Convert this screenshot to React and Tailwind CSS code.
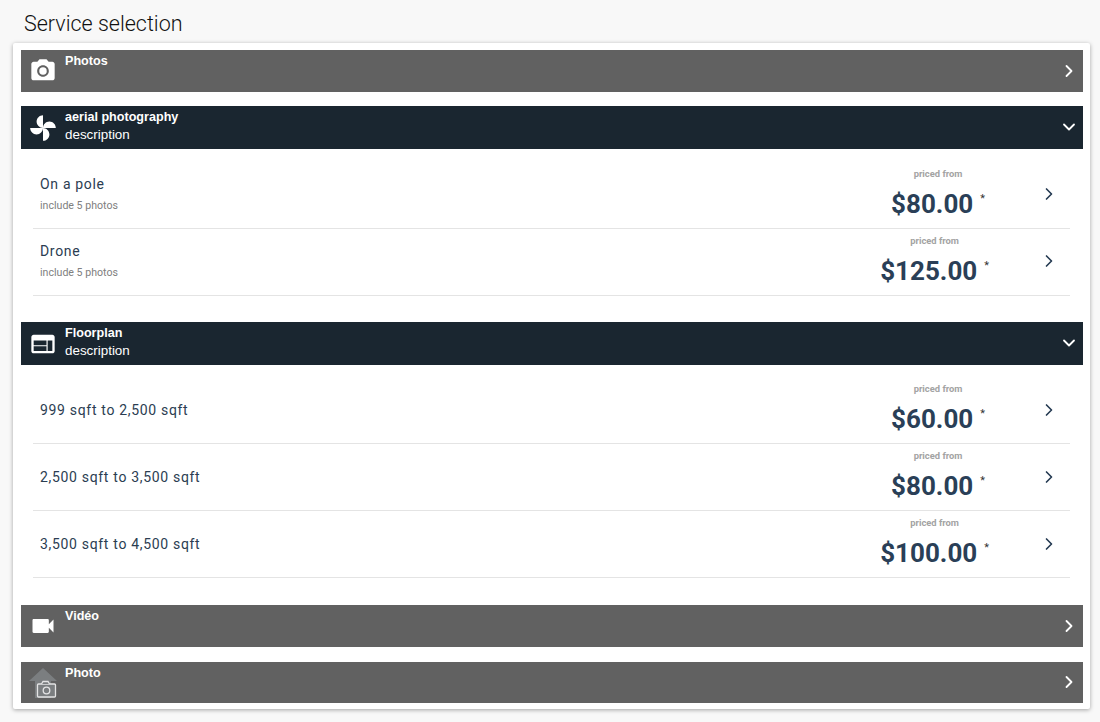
import React from "react";
import { ChevronRight, ChevronDown } from "lucide-react";

const CameraIcon = () => (
  <svg viewBox="0 0 24 24" className="w-[28px] h-[28px] fill-white">
    <circle cx="12" cy="12" r="3.2" />
    <path d="M9 2L7.17 4H4c-1.1 0-2 .9-2 2v12c0 1.1.9 2 2 2h16c1.1 0 2-.9 2-2V6c0-1.1-.9-2-2-2h-3.17L15 2H9zm3 15c-2.76 0-5-2.24-5-5s2.24-5 5-5 5 2.24 5 5-2.24 5-5 5z" />
  </svg>
);

const ToysIcon = () => (
  <svg viewBox="0 0 24 24" className="w-[28px] h-[28px] fill-white">
    <path d="M12 12c0-3 2.5-5.5 5.5-5.5S23 9 23 12H12zm0 0c0 3-2.5 5.5-5.5 5.5S1 15 1 12h11zm0 0c-3 0-5.5-2.5-5.5-5.5S9 1 12 1v11zm0 0c3 0 5.5 2.5 5.5 5.5S15 23 12 23V12z" />
  </svg>
);

const WebIcon = () => (
  <svg viewBox="0 0 24 24" className="w-[28px] h-[28px] fill-white">
    <path d="M20 4H4c-1.1 0-1.99.9-1.99 2L2 18c0 1.1.9 2 2 2h16c1.1 0 2-.9 2-2V6c0-1.1-.9-2-2-2zm-5 14H4v-4h11v4zm0-5H4V9h11v4zm5 5h-4V9h4v9z" />
  </svg>
);

const VideoIcon = () => (
  <svg viewBox="0 0 24 24" className="w-[28px] h-[28px] fill-white">
    <path d="M17 10.5V7c0-.55-.45-1-1-1H4c-.55 0-1 .45-1 1v10c0 .55.45 1 1 1h12c.55 0 1-.45 1-1v-3.5l4 4v-11l-4 4z" />
  </svg>
);

const UploadPhotoIcon = () => (
  <svg viewBox="0 0 30 32" className="w-[30px] h-[32px]">
    <path d="M1 14L15 1l14 13h-6v17H7V14z" fill="#7b7e80" />
    <rect x="9.5" y="17" width="18" height="13" rx="1" fill="#7b7e80" stroke="#e4e4e4" strokeWidth="1.3" />
    <path d="M13.5 17l1.5-2.5h5l1.5 2.5" fill="#7b7e80" stroke="#e4e4e4" strokeWidth="1.3" />
    <circle cx="18.5" cy="23.5" r="3.3" fill="none" stroke="#e4e4e4" strokeWidth="1.3" />
  </svg>
);

const SectionHeader = ({ icon, title, description, open, height = "h-[42px]" }) => (
  <div
    className={`flex items-start text-white font-['Liberation_Sans',sans-serif] ${
      open ? "bg-[#1a2630] h-[43px]" : `bg-[#616161] ${height}`
    }`}
  >
    <div className="w-[44px] h-full flex items-center justify-center shrink-0">{icon}</div>
    <div className="flex-1 pt-[3px]">
      <div className="text-[12.6px] leading-[17px] font-bold">{title}</div>
      {description && <div className="text-[13.4px] leading-[18px]">description</div>}
    </div>
    <div className="w-[28px] h-full pb-[1px] flex items-center justify-center shrink-0">
      {open ? <ChevronDown size={20} strokeWidth={2.2} /> : <ChevronRight size={20} strokeWidth={2.2} />}
    </div>
  </div>
);

const ServiceRow = ({ name, sub, price, offset }) => (
  <div className="h-[67px] flex border-b border-[#e4e4e4] font-['Roboto',sans-serif]">
    <div className={`flex-1 pl-[7px] ${sub ? "pt-[12px]" : "pt-[23px]"}`}>
      <div className="text-[14px] leading-[20px] tracking-[0.68px] text-[#2b3d52]">{name}</div>
      {sub && <div className="text-[10.6px] leading-[14px] mt-[5px] text-[#808080]">{sub}</div>}
    </div>
    <div className={`flex flex-col items-center ${offset}`}>
      <div className="text-[9.4px] leading-[12px] mt-[6px] font-bold text-[#a3a3a3]">priced from</div>
      <div className="flex items-start mt-[6px]">
        <span className="text-[26px] leading-[36px] font-bold text-[#2a3f57]">{price}</span>
        <span className="text-[11px] leading-[14px] ml-[7px] mt-[6px] text-[#333]">*</span>
      </div>
    </div>
    <div className={`w-[20px] mr-[11px] text-[#243a52] ${sub ? "pt-[22px]" : "pt-[23px]"}`}>
      <ChevronRight size={20} strokeWidth={2} />
    </div>
  </div>
);

export default function App() {
  return (
    <div className="bg-[#f8f8f8] min-h-[722px] pl-[13px] pr-[10px] font-['Roboto',sans-serif]">
      <h1 className="pl-[11px] h-[43px] pt-[9px] text-[21.5px] leading-[30px] font-light text-[#111]">
        Service selection
      </h1>
      <div className="bg-white h-[666px] pl-[8px] pr-[7px] pt-[7px] shadow-[0_1px_4px_rgba(0,0,0,0.35)] rounded-[2px]">
        <SectionHeader icon={<CameraIcon />} title="Photos" />

        <div className="mt-[14px]">
          <SectionHeader icon={<ToysIcon />} title="aerial photography" description open />
          <div className="ml-[12px] mr-[13px] mt-[13px] mb-[26px]">
            <ServiceRow name="On a pole" sub="include 5 photos" price="$80.00" offset="mr-[54px]" />
            <ServiceRow name="Drone" sub="include 5 photos" price="$125.00" offset="mr-[50px]" />
          </div>
        </div>

        <SectionHeader icon={<WebIcon />} title="Floorplan" description open />
        <div className="ml-[12px] mr-[13px] mt-[12px] mb-[27px]">
          <ServiceRow name="999 sqft to 2,500 sqft" price="$60.00" offset="mr-[54px]" />
          <ServiceRow name="2,500 sqft to 3,500 sqft" price="$80.00" offset="mr-[54px]" />
          <ServiceRow name="3,500 sqft to 4,500 sqft" price="$100.00" offset="mr-[50px]" />
        </div>

        <SectionHeader icon={<VideoIcon />} title="Vidéo" />
        <div className="mt-[15px]">
          <SectionHeader icon={<UploadPhotoIcon />} title="Photo" height="h-[41px]" />
        </div>
      </div>
    </div>
  );
}
